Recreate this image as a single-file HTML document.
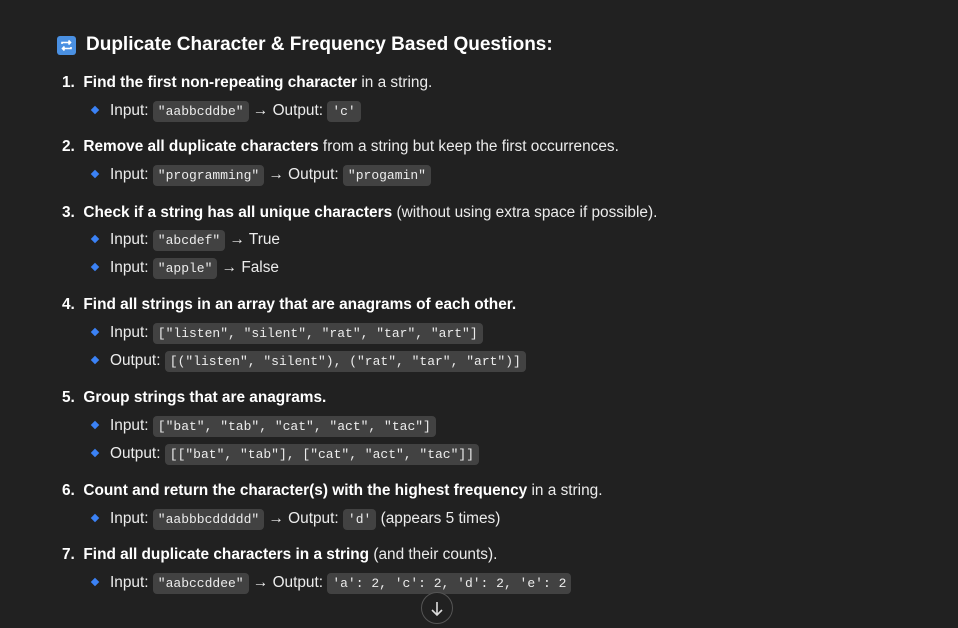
<!DOCTYPE html>
<html><head><meta charset="utf-8"><style>
body{margin:0;width:958px;height:616px;background:#212121;overflow:hidden;font-family:"Liberation Sans",sans-serif;color:#ececec;position:relative}
.l{position:absolute;white-space:nowrap;font-size:15.4px;line-height:22px}
.h{position:absolute;left:86px;top:34px;font-size:19px;font-weight:bold;color:#fff;white-space:nowrap}
b{font-weight:bold;color:#fff}
code{font-family:"Liberation Mono",monospace;font-size:13px;background:#424242;border-radius:4px;padding:3px 5px;color:#ececec}
.d{display:inline-block;width:6px;height:6px;background:#3b82f6;transform:rotate(45deg);margin:0 12px 2px 2px;vertical-align:middle}
</style></head><body>
<div style="position:absolute;left:57px;top:36px;width:19px;height:19px;background:#4a90e2;border-radius:3px"><svg width="19" height="19" viewBox="0 0 19 19"><path d="M5 8v-1.5h8.5M11.5 4.5l2 2-2 2M14 11v1.5H5.5M7.5 14.5l-2-2 2-2" stroke="#fff" stroke-width="1.6" fill="none"/></svg></div>
<div class="h">Duplicate Character &amp; Frequency Based Questions:</div>

<div class="l" style="left:62px;top:72px"><b>1.&nbsp;&nbsp;Find the first non-repeating character</b> in a string.</div>
<div class="l" style="left:90px;top:100px"><span class="d"></span>Input: <code>"aabbcddbe"</code> → Output: <code>'c'</code></div>

<div class="l" style="left:62px;top:136px"><b>2.&nbsp;&nbsp;Remove all duplicate characters</b> from a string but keep the first occurrences.</div>
<div class="l" style="left:90px;top:164px"><span class="d"></span>Input: <code>"programming"</code> → Output: <code>"progamin"</code></div>

<div class="l" style="left:62px;top:202px"><b>3.&nbsp;&nbsp;Check if a string has all unique characters</b> (without using extra space if possible).</div>
<div class="l" style="left:90px;top:229px"><span class="d"></span>Input: <code>"abcdef"</code> → True</div>
<div class="l" style="left:90px;top:257px"><span class="d"></span>Input: <code>"apple"</code> → False</div>

<div class="l" style="left:62px;top:294px"><b>4.&nbsp;&nbsp;Find all strings in an array that are anagrams of each other.</b></div>
<div class="l" style="left:90px;top:322px"><span class="d"></span>Input: <code>["listen", "silent", "rat", "tar", "art"]</code></div>
<div class="l" style="left:90px;top:350px"><span class="d"></span>Output: <code>[("listen", "silent"), ("rat", "tar", "art")]</code></div>

<div class="l" style="left:62px;top:387px"><b>5.&nbsp;&nbsp;Group strings that are anagrams.</b></div>
<div class="l" style="left:90px;top:415px"><span class="d"></span>Input: <code>["bat", "tab", "cat", "act", "tac"]</code></div>
<div class="l" style="left:90px;top:443px"><span class="d"></span>Output: <code>[["bat", "tab"], ["cat", "act", "tac"]]</code></div>

<div class="l" style="left:62px;top:480px"><b>6.&nbsp;&nbsp;Count and return the character(s) with the highest frequency</b> in a string.</div>
<div class="l" style="left:90px;top:508px"><span class="d"></span>Input: <code>"aabbbcddddd"</code> → Output: <code>'d'</code> (appears 5 times)</div>

<div class="l" style="left:62px;top:544px"><b>7.&nbsp;&nbsp;Find all duplicate characters in a string</b> (and their counts).</div>
<div class="l" style="left:90px;top:572px"><span class="d"></span>Input: <code>"aabccddee"</code> → Output: <code>'a': 2, 'c': 2, 'd': 2, 'e': 2</code></div>

<div style="position:absolute;left:421px;top:592px;width:30px;height:30px;border-radius:50%;border:1px solid #555;background:#212121"><svg width="30" height="30" viewBox="0 0 30 30"><path d="M15 9v13M10 17l5 5 5-5" stroke="#ddd" stroke-width="1.6" fill="none"/></svg></div>
</body></html>
